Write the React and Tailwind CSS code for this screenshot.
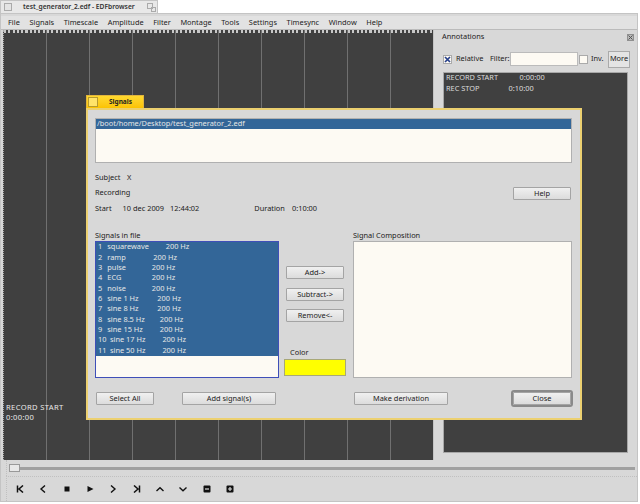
import React from 'react';

const MENUS = ['File', 'Signals', 'Timescale', 'Amplitude', 'Filter', 'Montage', 'Tools', 'Settings', 'Timesync', 'Window', 'Help'];

const SIGNALS = [
  ['1', 'squarewave', 'w-[58.4px]', 'w-[9.3px]'],
  ['2', 'ramp', 'w-[46px]', 'w-[9.3px]'],
  ['3', 'pulse', 'w-[44.4px]', 'w-[9.3px]'],
  ['4', 'ECG', 'w-[44.4px]', 'w-[9.3px]'],
  ['5', 'noise', 'w-[44.4px]', 'w-[9.3px]'],
  ['6', 'sine 1 Hz', 'w-[50px]', 'w-[9.3px]'],
  ['7', 'sine 8 Hz', 'w-[50px]', 'w-[9.3px]'],
  ['8', 'sine 8.5 Hz', 'w-[52.4px]', 'w-[9.3px]'],
  ['9', 'sine 15 Hz', 'w-[52.4px]', 'w-[9.3px]'],
  ['10', 'sine 17 Hz', 'w-[52.4px]', 'w-[12px]'],
  ['11', 'sine 50 Hz', 'w-[52.4px]', 'w-[12px]'],
];

const Button = ({ label, className = '' }) => (
  <button className={`h-[12.5px] flex items-center justify-center whitespace-nowrap text-[7.4px] leading-none text-[#222] bg-gradient-to-b from-[#f0f0f0] to-[#dcdcdc] border border-[#a4a4a4] rounded-[1px] ${className}`}>
    {label}
  </button>
);

const Canvas = () => (
  <div className="relative flex-1 min-w-0 bg-[#404040] border-l border-dotted border-[#aaa] overflow-hidden">
    <div className="flex h-[3px] bg-[repeating-linear-gradient(90deg,#c8c8c8_0,#c8c8c8_2px,#404040_2px,#404040_4.3px)]" />
    <div className="absolute inset-0 flex pl-[42px]">
      {[0, 1, 2, 3, 4, 5, 6, 7, 8].map((i) => (
        <div key={i} className="w-[43px] h-full shrink-0 border-l border-[#707070]" />
      ))}
    </div>
    <div className="absolute left-[2px] bottom-[38px] text-[7.6px] leading-[9.4px] text-[#e8e8e8] tracking-[0.35px] whitespace-nowrap">
      <div>RECORD START</div>
      <div>0:00:00</div>
    </div>
  </div>
);

const Annotations = () => (
  <div className="w-[204px] shrink-0 flex flex-col pl-[7px] pr-[3px] border-l border-[#c4c4c4] text-[7.4px] leading-none text-[#222] whitespace-nowrap">
    <div className="flex items-center justify-between h-[14px]">
      <span className="ml-[1px]">Annotations</span>
      <span className="w-[7px] h-[7px] flex items-center justify-center bg-[#b8b8b8] border border-[#909090]">
        <svg width="5" height="5" viewBox="0 0 5 5"><path d="M0.5 0.5L4.5 4.5M4.5 0.5L0.5 4.5" stroke="#555" strokeWidth="1" /></svg>
      </span>
    </div>
    <div className="flex items-center h-[16px] mt-[7px]">
      <span className="w-[9px] h-[9px] ml-[2px] flex items-center justify-center bg-[#fdfaf3] border border-[#aaa] shrink-0">
        <svg width="7" height="7" viewBox="0 0 7 7"><path d="M1 1L6 6M6 1L1 6" stroke="#27408b" strokeWidth="1.7" /></svg>
      </span>
      <span className="ml-[4px] w-[26px]">Relative</span>
      <span className="ml-[8px] w-[19px]">Filter:</span>
      <span className="w-[68px] h-[14px] ml-[1px] bg-[#fdfaf3] border border-[#bbb] shrink-0" />
      <span className="w-[9px] h-[9px] ml-[1px] bg-[#fdfaf3] border border-[#aaa] shrink-0" />
      <span className="ml-[3px] w-[12px]">Inv.</span>
      <span className="w-[22px] h-[17px] ml-[5px] flex items-center justify-center bg-[#e4e4e4] border border-[#aaa] shrink-0">More</span>
    </div>
    <div className="flex-1 mt-[5px] ml-[2px] mr-[6px] mb-[7px] bg-[#404040] border border-[#a8a8a8] text-[#dcdcdc] pl-[2px]">
      <div className="flex h-[10.3px] items-center"><span className="w-[73.6px]">RECORD START</span><span>0:00:00</span></div>
      <div className="flex h-[10.3px] items-center"><span className="w-[62.6px]">REC STOP</span><span>0:10:00</span></div>
    </div>
  </div>
);

const SignalsDialog = () => (
  <div className="absolute left-[86px] top-[95px] w-[496px] text-[7.4px] leading-none text-[#222] whitespace-nowrap">
    <div className="flex items-center w-[58px] h-[13px] bg-gradient-to-b from-[#ffd92e] to-[#fcc300] border border-b-0 border-[#e2b53c]">
      <span className="w-[10px] h-[10px] ml-[1px] bg-[#ffe36a] border border-[#b79a2e]" />
      <span className="ml-[11px] font-bold text-[6.5px]">Signals</span>
    </div>
    <div className="h-[312px] flex flex-col border-2 border-[#ecd070] bg-[#d8d8d8] pl-[7px] pr-[8px] pt-[8px]">
      <div className="h-[45px] bg-[#fdfaf3] border border-[#b0b0b0]">
        <div className="h-[10px] pl-[1px] bg-[#336698] text-[#e6e6e6] flex items-center">/boot/home/Desktop/test_generator_2.edf</div>
      </div>
      <div className="flex mt-[7px]">
        <div className="w-[418px] shrink-0">
          <div className="flex h-[15px] items-center"><span className="w-[32px]">Subject</span><span>X</span></div>
          <div className="flex h-[16px] items-center">Recording</div>
          <div className="flex h-[15px] items-center">
            <span className="w-[27.6px]">Start</span>
            <span className="w-[47.4px]">10 dec 2009</span>
            <span className="w-[84.3px]">12:44:02</span>
            <span className="w-[37.7px]">Duration</span>
            <span>0:10:00</span>
          </div>
        </div>
        <Button label="Help" className="w-[58px] mt-[17px]" />
      </div>
      <div className="flex mt-[15px]">
        <div className="w-[184px] shrink-0">
          <div className="h-[10px] flex items-center">Signals in file</div>
          <div className="h-[137px] bg-[#fdfaf3] border border-[#3f4fb8]">
            <div className="bg-[#336698] text-[#e6e6e6] pl-[2px]">
              {SIGNALS.map(([num, name, nameWidth, numWidth]) => (
                <div key={num} className="flex items-center h-[10.33px]">
                  <span className={numWidth}>{num}</span>
                  <span className={nameWidth}>{name}</span>
                  <span>200 Hz</span>
                </div>
              ))}
            </div>
          </div>
        </div>
        <div className="w-[74px] shrink-0 flex flex-col pl-[5px] pt-[35px]">
          <Button label="Add->" className="w-[58px] ml-[2px]" />
          <Button label="Subtract->" className="w-[58px] ml-[2px] mt-[9.5px]" />
          <Button label="Remove<-" className="w-[58px] ml-[2px] mt-[8.5px]" />
          <span className="mt-[27px] ml-[6px]">Color</span>
          <div className="w-[62px] h-[17px] mt-[3px] bg-[#ffff00] border border-[#a8a878] shrink-0" />
        </div>
        <div className="flex-1 min-w-0">
          <div className="h-[10px] flex items-center">Signal Composition</div>
          <div className="h-[137px] bg-[#fdfaf3] border border-[#b0b0b0]" />
        </div>
      </div>
      <div className="flex mt-[14px] pl-[1px]">
        <Button label="Select All" className="w-[58px]" />
        <Button label="Add signal(s)" className="w-[94px] ml-[28px]" />
        <Button label="Make derivation" className="w-[94px] ml-[78px]" />
        <Button label="Close" className="w-[58px] ml-[65px] outline-2 outline-[#8a8a8a]" />
      </div>
    </div>
  </div>
);

const ICON_PATHS = [
  <path key="a" d="M1.5 0.5V7.5M7 0.5L3 4L7 7.5" fill="none" stroke="#111" strokeWidth="1.5" />,
  <path key="b" d="M6 0.5L2 4L6 7.5" fill="none" stroke="#111" strokeWidth="1.4" />,
  <rect key="c" x="1.5" y="1.5" width="5" height="5" fill="#111" />,
  <path key="d" d="M1.5 1L7.5 4L1.5 7Z" fill="#111" />,
  <path key="e" d="M2 0.5L6 4L2 7.5" fill="none" stroke="#111" strokeWidth="1.4" />,
  <path key="f" d="M6.5 0.5V7.5M1 0.5L5 4L1 7.5" fill="none" stroke="#111" strokeWidth="1.5" />,
  <path key="g" d="M0.5 6L4 2.8L7.5 6" fill="none" stroke="#111" strokeWidth="1.4" />,
  <path key="h" d="M0.5 2.5L4 5.7L7.5 2.5" fill="none" stroke="#111" strokeWidth="1.4" />,
  <g key="i"><rect x="0.5" y="0.5" width="7" height="7" rx="1" fill="#111" /><rect x="2" y="3.4" width="4" height="1.2" fill="#ddd" /></g>,
  <g key="j"><rect x="0.5" y="0.5" width="7" height="7" rx="1" fill="#111" /><path d="M2 4H6M4 2V6" stroke="#ddd" strokeWidth="1.2" /></g>,
];

export default function App() {
  return (
    <div className="relative w-[640px] h-[504px] overflow-hidden bg-white font-['Noto_Sans',sans-serif]">
      <div className="flex items-center w-[158px] h-[13px] bg-[#e8e8e8] border border-b-0 border-[#c4c4c4]">
        <span className="w-[8px] h-[8px] ml-[3px] bg-[#e4e4e4] border border-[#aaa] shrink-0" />
        <span className="ml-[11px] w-[124px] text-[6.7px] font-semibold leading-none text-[#333] whitespace-nowrap">test_generator_2.edf - EDFbrowser</span>
        <span className="relative w-[9px] h-[9px] shrink-0">
          <span className="absolute left-0 top-0 w-[6px] h-[6px] border border-[#aaa]" />
          <span className="absolute right-0 bottom-0 w-[5px] h-[5px] border border-[#aaa]" />
        </span>
      </div>
      <div className="w-[638px] h-[489px] flex flex-col bg-[#d8d8d8] border border-[#c4c4c4] pt-[2px]">
        <div className="flex items-center gap-[9.6px] pl-[7px] h-[14px] shrink-0 bg-[#e2e2e2] border-b border-[#bbb] text-[7.4px] leading-none text-[#222] whitespace-nowrap">
          {MENUS.map((label) => (
            <span key={label}>{label}</span>
          ))}
        </div>
        <div className="flex flex-1 min-h-0 pl-[2px]">
          <Canvas />
          <Annotations />
        </div>
        <div className="shrink-0 h-[16px] flex items-center ml-[5px] pl-[2px] pr-[2px] border-l border-dotted border-[#c0c0c0]">
          <span className="w-[11px] h-[8px] bg-[#e8e8e8] border border-[#999] shrink-0" />
          <span className="flex-1 h-[3px] bg-[#a0a0a0]" />
        </div>
        <div className="shrink-0 h-[25px] flex items-center ml-[5px] pl-[9px] border-l border-t border-dotted border-[#c0c0c0]">
          {ICON_PATHS.map((icon, i) => (
            <svg key={i} width="8" height="8" viewBox="0 0 8 8" className="mr-[15.33px] shrink-0">{icon}</svg>
          ))}
        </div>
      </div>
      <SignalsDialog />
    </div>
  );
}
